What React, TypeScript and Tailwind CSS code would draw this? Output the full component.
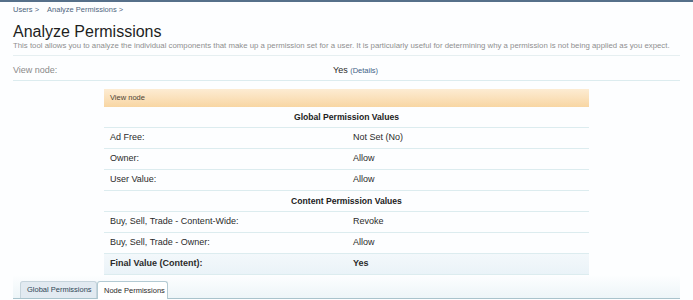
import React from "react";

const Row = ({ label, value, bold, final }: { label: string; value: string; bold?: boolean; final?: boolean }) => (
  <div
    className={`flex h-[21px] items-center border-b border-[#dcecef] text-[9px] text-[#2b2b2b] ${
      bold ? "font-bold" : ""
    } ${final ? "bg-gradient-to-b from-[#f3f8fb] to-[#eaf3f8]" : ""}`}
  >
    <div className="w-[249px] pl-[6px]">{label}</div>
    <div>{value}</div>
  </div>
);

const Header = ({ text }: { text: string }) => (
  <div className="flex h-[21px] items-center justify-center border-b border-[#dcecef] text-[8.6px] font-bold text-[#222]">
    {text}
  </div>
);

export default function App() {
  return (
    <div className="w-[693px] h-[300px] overflow-hidden bg-[#fdfeff] font-['Liberation_Sans',Arial,sans-serif]">
      <div className="h-[2px] bg-[#56708a]" />
      <div className="px-[13px]">
        <div className="pt-[3px] text-[7.5px] leading-[10px] text-[#4f6680]">
          <span>Users &gt;</span>
          <span className="ml-[8px]">Analyze Permissions &gt;</span>
        </div>
        <div className="mt-[8px] text-[16px] leading-[18px] text-[#1e1e1e]">Analyze Permissions</div>
        <div className="whitespace-nowrap border-b border-[#e6eff1] pb-[4px] text-[7.8px] leading-[10px] text-[#8f8f8f]">
          This tool allows you to analyze the individual components that make up a permission set for a user. It is
          particularly useful for determining why a permission is not being applied as you expect.
        </div>
        <div className="flex border-b border-[#dcecef] pt-[8px] pb-[3px] text-[9px] leading-[12px]">
          <div className="w-[320px] text-[#8a8a8a]">View node:</div>
          <div className="text-[#2b2b2b]">
            Yes <span className="text-[7.5px] text-[#3d5f86]">(Details)</span>
          </div>
        </div>
        <div className="mx-auto mt-[8px] w-[485px]">
          <div className="flex h-[18px] items-center bg-gradient-to-b from-[#fdecd3] to-[#f8d6a3] pl-[6px] text-[7.5px] text-[#4d4236]">
            View node
          </div>
          <Header text="Global Permission Values" />
          <Row label="Ad Free:" value="Not Set (No)" />
          <Row label="Owner:" value="Allow" />
          <Row label="User Value:" value="Allow" />
          <Header text="Content Permission Values" />
          <Row label="Buy, Sell, Trade - Content-Wide:" value="Revoke" />
          <Row label="Buy, Sell, Trade - Owner:" value="Allow" />
          <Row label="Final Value (Content):" value="Yes" bold final />
        </div>
        <div className="flex h-[24px] items-end border-b border-[#a9c3cc] bg-gradient-to-b from-[#fdfeff] to-[#edf5f8] pl-[7px]">
          <div className="flex h-[17px] w-[77px] items-center rounded-t-[3px] border border-b-0 border-[#c6d4dc] bg-[#e2eaf1] pl-[6px] text-[7.5px] text-[#2f4656]">
            Global Permissions
          </div>
          <div className="-mb-[1px] flex h-[18px] w-[71px] items-center rounded-t-[3px] border border-b-0 border-[#b3cad3] bg-white pl-[6px] text-[7.5px] text-[#2a2a2a]">
            Node Permissions
          </div>
        </div>
      </div>
    </div>
  );
}
